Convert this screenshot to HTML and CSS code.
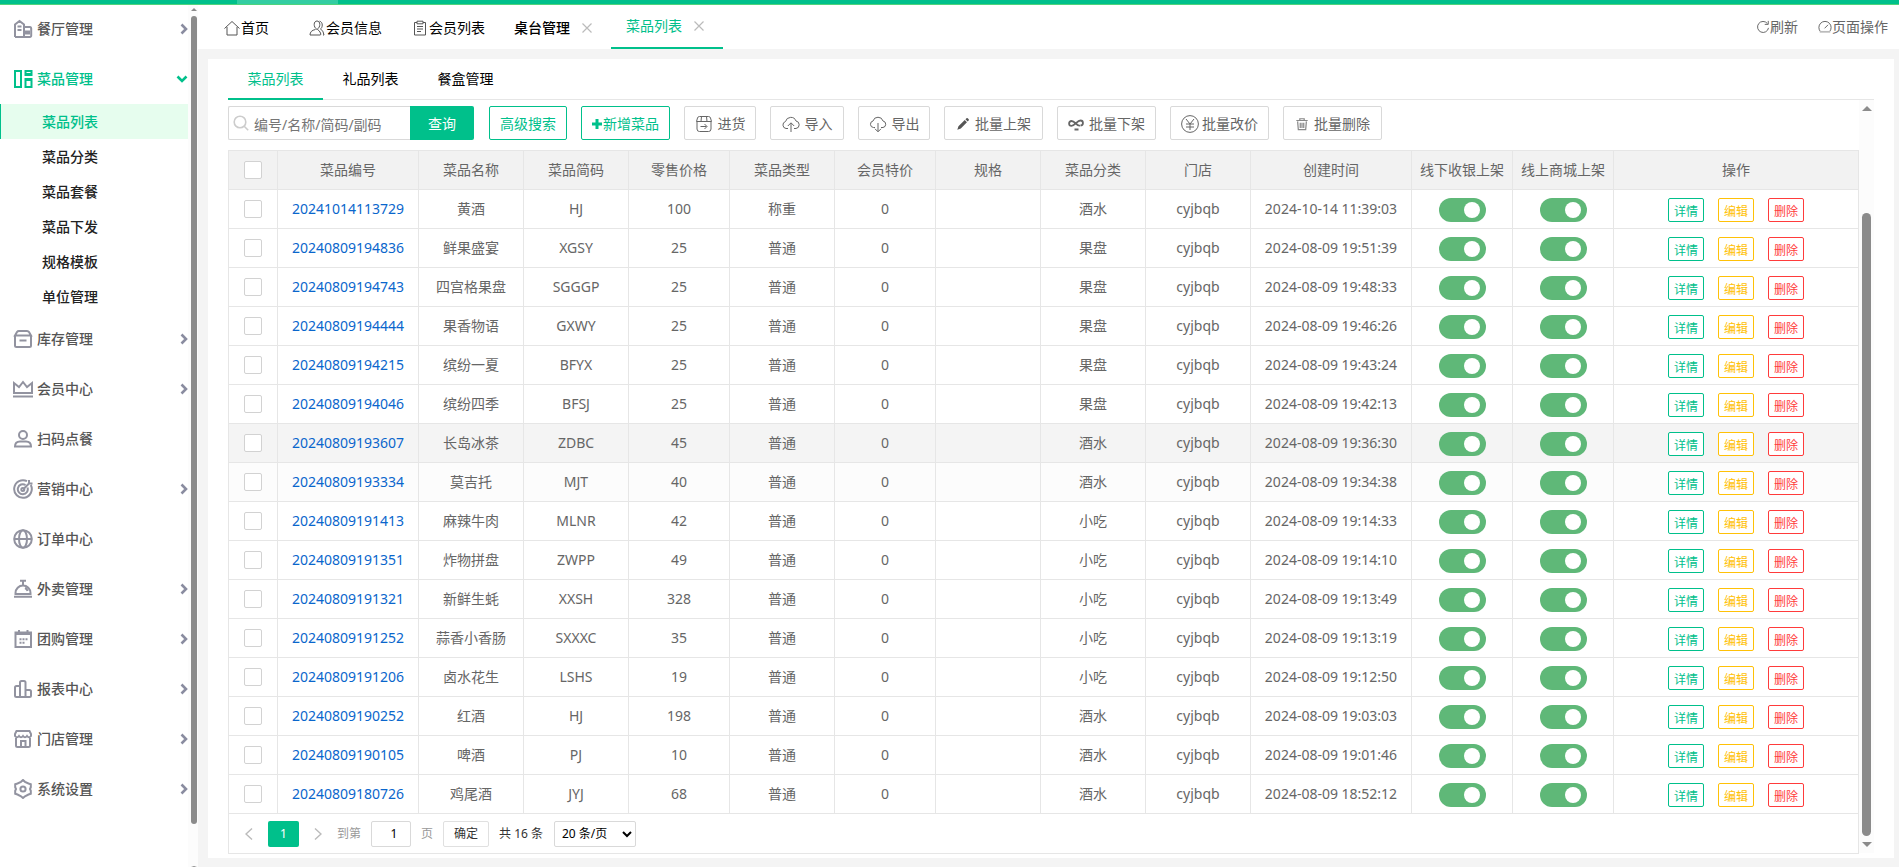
FILE: index.html
```html
<!DOCTYPE html>
<html lang="zh-CN">
<head>
<meta charset="utf-8">
<title>菜品列表</title>
<link rel="stylesheet" href="styles.css">
</head>
<body>
<header class="topbar"><span class="topbar-active"></span></header>
<div class="shell">
  <aside class="sidebar">
    <nav class="menu">
      <a class="item" href="#"><svg class="mi" viewBox="0 0 20 20"><path d="M2 18V5.500L6.500 2 11 5.500V18M2 18h15a1.200 1.200 0 0 0 1.200-1.200V9.500A1.500 1.500 0 0 0 17 8h-6M4.500 7.500h4M4.500 11h4M13 12.500h3v2h-3z"/></svg>餐厅管理<svg class="arr" viewBox="0 0 8 12"><path d="M1.500 1.500 6 6l-4.500 4.500"/></svg></a>
      <a class="item open" href="#"><svg class="mi" viewBox="0 0 20 20"><path d="M2 2h6v16H2zM12.500 2h6v4h-6zM12.500 10h6v8h-6zM12.500 5h6M12.500 11h6"/></svg>菜品管理<svg class="arr down" viewBox="0 0 12 8"><path d="M1.500 1.500 6 6l4.500-4.500"/></svg></a>
      <div class="sub">
        <a class="on" href="#">菜品列表</a>
        <a href="#">菜品分类</a>
        <a href="#">菜品套餐</a>
        <a href="#">菜品下发</a>
        <a href="#">规格模板</a>
        <a href="#">单位管理</a>
      </div>
      <a class="item" href="#"><svg class="mi" viewBox="0 0 20 20"><path d="M2 6v10.500A1.500 1.500 0 0 0 3.500 18h13a1.500 1.500 0 0 0 1.500-1.500V6M2 6.500h16L16 3q-.6-1-2-1H6Q4.600 2 4 3zM6.500 11.500h7"/></svg>库存管理<svg class="arr" viewBox="0 0 8 12"><path d="M1.500 1.500 6 6l-4.500 4.500"/></svg></a>
      <a class="item" href="#"><svg class="mi" viewBox="0 0 20 20"><path d="M1 14V4l5 4 4-5 4 5 5-4v10zM0 17.500h20"/></svg>会员中心<svg class="arr" viewBox="0 0 8 12"><path d="M1.500 1.500 6 6l-4.500 4.500"/></svg></a>
      <a class="item" href="#"><svg class="mi" viewBox="0 0 20 20"><circle cx="10" cy="6" r="4"/><path d="M2 17.500q0-5 5-5h6q5 0 5 5z"/></svg>扫码点餐</a>
      <a class="item" href="#"><svg class="mi" viewBox="0 0 20 20"><path d="M14 2.200A8.800 8.800 0 1 0 17.800 6M12.500 6A5 5 0 1 0 14.500 8.500M10 10.500 17 3.500M16 1v3.500h3.500"/><circle cx="9.800" cy="10.500" r="1.500"/></svg>营销中心<svg class="arr" viewBox="0 0 8 12"><path d="M1.500 1.500 6 6l-4.500 4.500"/></svg></a>
      <a class="item" href="#"><svg class="mi" viewBox="0 0 20 20"><circle cx="10" cy="10" r="8.800"/><ellipse cx="10" cy="10" rx="4" ry="8.800"/><path d="M1 10h18"/></svg>订单中心</a>
      <a class="item" href="#"><svg class="mi" viewBox="0 0 20 20"><path d="M2.500 15v-1a7.500 7.500 0 0 1 15 0v1zM1 17.800h18M7 1.800h6M10 2v4M12 9q2 .8 2.600 3"/></svg>外卖管理<svg class="arr" viewBox="0 0 8 12"><path d="M1.500 1.500 6 6l-4.500 4.500"/></svg></a>
      <a class="item" href="#"><svg class="mi" viewBox="0 0 20 20"><path d="M2.500 3.500h15.500V18h-15.500zM2.500 5H18M6 1v3M14.500 1v3M6.500 10.200h2M9.500 10.200h2M12.500 10.200h2M6.500 13.700h2M9.500 13.700h2"/></svg>团购管理<svg class="arr" viewBox="0 0 8 12"><path d="M1.500 1.500 6 6l-4.500 4.500"/></svg></a>
      <a class="item" href="#"><svg class="mi" viewBox="0 0 20 20"><path d="M7 18V3.500Q7 2 8.500 2h2.500q1.500 0 1.500 1.500V18M7 7H3.500Q2 7 2 8.500v8Q2 18 3.500 18h13q1.500 0 1.500-1.500v-4Q18 11 16.500 11h-4"/></svg>报表中心<svg class="arr" viewBox="0 0 8 12"><path d="M1.500 1.500 6 6l-4.500 4.500"/></svg></a>
      <a class="item" href="#"><svg class="mi" viewBox="0 0 20 20"><path d="M3 9v7.500Q3 18 4.500 18h11q1.500 0 1.500-1.500V9M8 18v-6h4.500v6M3.500 2h13l1.500 3v2q-2 2.600-4 0-2 2.600-4 0-2 2.600-4 0-2 2.600-4 0V5z"/></svg>门店管理<svg class="arr" viewBox="0 0 8 12"><path d="M1.500 1.500 6 6l-4.500 4.500"/></svg></a>
      <a class="item" href="#"><svg class="mi" viewBox="0 0 20 20"><path d="M8 2.800 10 1l2 1.800 3.500 1.700 2.300.7v3l-.8 1.800.8 1.800v3l-2.300.7L12 17.300 10 19l-2-1.700-3.500-1.800-2.300-.7v-3L3 10l-.8-1.800v-3l2.300-.7z"/><circle cx="10" cy="10" r="2.600"/></svg>系统设置<svg class="arr" viewBox="0 0 8 12"><path d="M1.500 1.500 6 6l-4.500 4.500"/></svg></a>
    </nav>
    <div class="side-scroll"><i class="tri up"></i><i class="thumb"></i><i class="tri end"></i></div>
  </aside>
  <div class="main">
    <div class="pagebar">
      <nav class="pages">
        <a class="p-home" href="#"><svg class="pi" viewBox="0 0 16 16"><path d="M.5 8.500 8 1.500l7.500 7M3 7v8h10V7"/></svg>首页</a>
        <a class="p-info" href="#"><svg class="pi" viewBox="0 0 16 16"><path d="M8 9.500C4 7 4.500 1 8 1s4 6 0 8.500zM6.500 9.500Q1 10.500 1 15h10q1.500 0 .5-2-1-2.500-3-3.500M10.500 1.200C14.500 2 13.500 8 11.500 9q3 1.500 3.500 6h-1"/></svg>会员信息</a>
        <a class="p-list" href="#"><svg class="pi" viewBox="0 0 16 16"><path d="M5 2.500H2.500v12.500h11V2.500H11M5 1.200h6v2.600H5zM5 6.500h6M5 9h6M5 11.500h4"/></svg>会员列表</a>
        <a class="p-desk" href="#">桌台管理<svg class="x" viewBox="0 0 10 10"><path d="m.5.500 9 9m0-9-9 9"/></svg></a>
        <a class="p-on" href="#">菜品列表<svg class="x" viewBox="0 0 10 10"><path d="m.5.500 9 9m0-9-9 9"/></svg></a>
      </nav>
      <div class="tools">
        <a href="#"><svg class="pi" viewBox="0 0 16 16"><path d="M13 4A6.300 6.300 0 1 0 14.300 9M10 5h4V1"/></svg>刷新</a>
        <a href="#"><svg class="pi" viewBox="0 0 16 16"><path d="M3 13.500A7 7 0 1 1 13 13.500M7.500 9.500l4-4"/><path class="soft" d="M2 13.500h12"/></svg>页面操作</a>
      </div>
    </div>
    <main class="card">
      <nav class="tabs"><a class="on" href="#">菜品列表</a><a href="#">礼品列表</a><a href="#">餐盒管理</a></nav>
      <div class="body">
        <div class="content">
          <div class="bar">
            <div class="search">
              <svg class="lens" viewBox="0 0 16 16"><circle cx="7" cy="7" r="5.800"/><path d="m11.200 11.200 4 4"/></svg>
              <input type="text" aria-label="搜索菜品" placeholder="编号/名称/简码/副码"><button>查询</button>
            </div>
            <button class="btn green adv">高级搜索</button>
            <button class="btn green add"><svg viewBox="0 0 10 10"><path d="M5 0v10M0 5h10"/></svg>新增菜品</button>
            <button class="btn stock"><svg viewBox="0 0 18 18"><path d="M2 6.500V14q0 2.500 2.500 2.500h9Q16 16.500 16 14V6.500M1.500 6.500l1-3.500q.4-1.500 2-1.500h9q1.600 0 2 1.500l1 3.500zM6.500 1.500l-.5 5M11.500 1.500l.5 5M5.500 11.500h6M9.500 9l2.500 2.500L9.500 14"/></svg>进货</button>
            <button class="btn in"><svg viewBox="0 0 18 18"><path d="M6 13.500H4A3.600 3.600 0 0 1 3.500 6.500 5.500 5.500 0 0 1 14 6a3.800 3.800 0 0 1 0 7.500h-2M9 17V8M5.800 11 9 7.800l3.200 3.200"/></svg>导入</button>
            <button class="btn out"><svg viewBox="0 0 18 18"><path d="M6 12.500H4.500A3.300 3.300 0 0 1 4 6 5.200 5.200 0 0 1 14 6a3.300 3.300 0 0 1 0 6.500h-2M9 8v8.500M6 13.800l3 3 3-3"/></svg>导出</button>
            <button class="btn bulk"><svg class="fill" viewBox="0 0 16 16"><path d="M1.500 14.500l1.300-4L10 3.500l2.500 2.500-7 7zM10.800 2.700l1.200-1.200q.7-.6 1.400 0l1.100 1.100q.6.700 0 1.400l-1.200 1.200z"/></svg>批量上架</button>
            <button class="btn bulk"><svg class="bold" viewBox="0 0 16 16"><path d="M12 9.500C9 10.500 7 5 3.500 5a2.300 2.300 0 1 0 0 4.800C7 9.800 9 4.500 12.500 4.500a2.400 2.400 0 0 1 0 4.900M6.500 13.500h4"/></svg>批量下架</button>
            <button class="btn bulk yen"><svg viewBox="0 0 18 18"><circle cx="9" cy="9" r="8.400"/><path d="m5 4 4 5 4-5M9 9v6M5 9h8M5 12h8"/></svg>批量改价</button>
            <button class="btn bulk del-all"><svg viewBox="0 0 16 16"><path d="M1.500 4h13M5.500 3.500V2h5v1.500M3 5l.8 9.500h8.400L13 5M6 6.500v6M8 6.500v6M10 6.500v6"/></svg>批量删除</button>
          </div>
          <table>
            <colgroup><col class="c1"><col class="c2"><col class="c3"><col class="c3"><col class="c4"><col class="c3"><col class="c4"><col class="c3"><col class="c3"><col class="c3"><col class="c5"><col class="c4"><col class="c4"><col></colgroup>
            <thead><tr><th><input type="checkbox" aria-label="全选"></th><th>菜品编号</th><th>菜品名称</th><th>菜品简码</th><th>零售价格</th><th>菜品类型</th><th>会员特价</th><th>规格</th><th>菜品分类</th><th>门店</th><th>创建时间</th><th>线下收银上架</th><th>线上商城上架</th><th>操作</th></tr></thead>
            <tbody id="rows"></tbody>
          </table>
          <div class="pager">
            <a class="step" href="#" aria-label="上一页"><svg viewBox="0 0 8 12"><path d="M7 .5 1 6l6 5.500"/></svg></a>
            <a class="cur" href="#">1</a>
            <a class="step" href="#" aria-label="下一页"><svg viewBox="0 0 8 12"><path d="m1 .5 6 5.500-6 5.500"/></svg></a>
            <label class="goto">到第<input type="text" value="1">页</label>
            <button>确定</button>
            <span class="total">共 16 条</span>
            <select aria-label="每页条数"><option>20 条/页</option></select>
          </div>
        </div>
        <div class="scroll"><i class="tri up"></i><i class="thumb"></i><i class="tri dn"></i></div>
      </div>
    </main>
  </div>
</div>
<script src="rows.js"></script>
</body>
</html>
```
FILE: rows.js
```js
const dishes = [
  ["20241014113729", "黄酒", "HJ", "100", "称重", "酒水", "2024-10-14 11:39:03"],
  ["20240809194836", "鲜果盛宴", "XGSY", "25", "普通", "果盘", "2024-08-09 19:51:39"],
  ["20240809194743", "四宫格果盘", "SGGGP", "25", "普通", "果盘", "2024-08-09 19:48:33"],
  ["20240809194444", "果香物语", "GXWY", "25", "普通", "果盘", "2024-08-09 19:46:26"],
  ["20240809194215", "缤纷一夏", "BFYX", "25", "普通", "果盘", "2024-08-09 19:43:24"],
  ["20240809194046", "缤纷四季", "BFSJ", "25", "普通", "果盘", "2024-08-09 19:42:13"],
  ["20240809193607", "长岛冰茶", "ZDBC", "45", "普通", "酒水", "2024-08-09 19:36:30", "hover"],
  ["20240809193334", "莫吉托", "MJT", "40", "普通", "酒水", "2024-08-09 19:34:38", "fading"],
  ["20240809191413", "麻辣牛肉", "MLNR", "42", "普通", "小吃", "2024-08-09 19:14:33"],
  ["20240809191351", "炸物拼盘", "ZWPP", "49", "普通", "小吃", "2024-08-09 19:14:10"],
  ["20240809191321", "新鲜生蚝", "XXSH", "328", "普通", "小吃", "2024-08-09 19:13:49"],
  ["20240809191252", "蒜香小香肠", "SXXXC", "35", "普通", "小吃", "2024-08-09 19:13:19"],
  ["20240809191206", "卤水花生", "LSHS", "19", "普通", "小吃", "2024-08-09 19:12:50"],
  ["20240809190252", "红酒", "HJ", "198", "普通", "酒水", "2024-08-09 19:03:03"],
  ["20240809190105", "啤酒", "PJ", "10", "普通", "酒水", "2024-08-09 19:01:46"],
  ["20240809180726", "鸡尾酒", "JYJ", "68", "普通", "酒水", "2024-08-09 18:52:12"]
];
document.getElementById("rows").innerHTML = dishes.map(([id, name, code, price, type, group, time, state = ""]) => `
<tr class="${state}">
<td><input type="checkbox" aria-label="选择${name}"></td>
<td><a class="id" href="#">${id}</a></td><td>${name}</td><td>${code}</td><td>${price}</td><td>${type}</td>
<td>0</td><td></td><td>${group}</td><td>cyjbqb</td><td>${time}</td>
<td class="ctl"><input class="switch" type="checkbox" checked aria-label="${name}线下收银上架"></td>
<td class="ctl"><input class="switch" type="checkbox" checked aria-label="${name}线上商城上架"></td>
<td class="ctl"><div class="ops"><button class="view">详情</button><button class="edit">编辑</button><button class="del">删除</button></div></td>
</tr>`).join("");
```
FILE: styles.css
```css
* { box-sizing: border-box; }
body {
  margin: 0;
  height: 100vh;
  display: flex;
  flex-direction: column;
  overflow: hidden;
  background: #fff;
  color: #666;
  font: 14px/20px "Noto Sans", "Noto Sans CJK SC", sans-serif;
}
a { color: inherit; text-decoration: none; }
button, input, select { font: inherit; margin: 0; }
svg { flex: none; fill: none; stroke: currentColor; }

.topbar {
  position: relative;
  z-index: 1;
  flex: none;
  height: 4px;
  padding-left: 237px;
  background: #00c08b;
  box-shadow: 0 1px #4fd37c;
}
.topbar-active { display: block; width: 101px; height: 4px; background: #33cda2; }
.shell { flex: 1; min-height: 0; display: flex; }

.sidebar { flex: none; width: 198px; display: flex; }
.menu { flex: none; width: 188px; }
.item {
  display: flex;
  align-items: center;
  height: 50px;
  padding-left: 13px;
  gap: 4px;
  font-weight: 500;
  color: #555;
}
.item.open { color: #00c08b; }
.mi { width: 20px; height: 20px; stroke: #9293a0; stroke-width: 2; }
.arr { width: 8px; height: 12px; margin-left: auto; stroke: #8a8ca0; stroke-width: 2.6; }
.arr.down { width: 12px; height: 8px; }
.open .mi, .open .arr { stroke: #00c08b; }
.sub a {
  display: block;
  height: 35px;
  padding-left: 41px;
  border-left: 1px solid transparent;
  line-height: 35px;
  font-weight: 500;
  color: #222;
}
.sub .on { background: #e6fdee; border-color: #00c08b; color: #00c08b; }
.side-scroll, .scroll { display: flex; flex-direction: column; align-items: center; background: #fcfcfc; }
.side-scroll { width: 10px; padding: 4px 0 0 1px; }
.side-scroll .thumb { width: 6px; flex: 1; margin: 5px 0 42px; border-radius: 3px; background: #8b8b8b; }
.tri { width: 0; height: 0; border: solid transparent; }
.side-scroll .tri { border-width: 0 3px 3px; border-bottom-color: #8b8b8b; }
.side-scroll .end { border-width: 1px 3px 0; border-top-color: #8b8b8b; }

.main { flex: 1; min-width: 0; display: flex; flex-direction: column; background: #f4f4f4; }
.pagebar {
  flex: none;
  height: 45px;
  display: flex;
  justify-content: space-between;
  padding: 0 11px 0 26px;
  background: #fff;
}
.pages, .pages a, .tools, .tools a { display: flex; align-items: center; }
.pages { color: #000; }
.pages a { height: 44px; padding-top: 2px; gap: 1px; }
.pi { width: 16px; height: 16px; stroke: #555; stroke-width: 1; }
.pages .p-info { margin-left: 40px; }
.pages .p-list { margin-left: 30px; }
.pages .p-desk { margin-left: 29px; font-weight: 500; }
.x { width: 10px; height: 10px; margin-left: 11px; stroke: #bbb; stroke-width: 1.2; }
.pages .p-on { margin-left: 19px; padding: 0 19px 0 15px; border-bottom: 2px solid #00c08b; color: #00c08b; }
.tools { gap: 20px; }
.tools .pi { width: 14px; height: 14px; }
.pi .soft { stroke: #bbb; stroke-width: 2; }

.card {
  flex: 1;
  min-height: 0;
  display: flex;
  flex-direction: column;
  margin: 10px 5px 9px 10px;
  padding: 0 20px 5px;
  background: #fff;
}
.tabs { display: flex; height: 41px; border-bottom: 1px solid #e6e6e6; color: #000; flex: none; }
.tabs a { width: 95px; height: 41px; line-height: 40px; text-align: center; }
.tabs .on { color: #00c08b; border-bottom: 2px solid #00c08b; }
.body { flex: 1; min-height: 0; display: flex; }
.content { flex: 1; min-width: 0; }
.scroll { flex: none; width: 15px; padding: 6px 0; }
.scroll .up { border-width: 0 5px 5px; border-bottom-color: #8b8b8b; }
.scroll .dn { border-width: 5px 5px 0; border-top-color: #8b8b8b; }
.scroll .thumb { flex: 1; width: 9px; margin: 102px 0 6px; border-radius: 5px; background: #8b8b8b; }

.bar { display: flex; padding: 6px 0 10px; gap: 14px; }
.search { position: relative; display: flex; margin-right: 1px; }
.search input { width: 182px; height: 34px; padding: 2px 0 0 25px; border: 1px solid #d9d9d9; border-right: 0; border-radius: 2px 0 0 2px; outline: 0; }
.search input::placeholder { color: #757575; }
.search button { width: 64px; padding: 2px 0 0; border: 0; border-radius: 0 2px 2px 0; background: #00c08b; color: #fff; }
.lens { position: absolute; left: 5px; top: 9px; width: 16px; height: 16px; stroke: #ccc; stroke-width: 1.6; }
.btn {
  display: flex;
  align-items: center;
  justify-content: center;
  height: 34px;
  padding: 2px 0 0;
  border: 1px solid #d9d9d9;
  border-radius: 2px;
  background: #fff;
  color: #666;
  gap: 5px;
}
.btn svg { width: 18px; height: 18px; }
.green { border-color: #00c08b; color: #00c08b; }
.adv { width: 78px; }
.add { width: 89px; gap: 1px; }
.add svg { width: 10px; height: 10px; stroke-width: 3; }
.stock { width: 72px; }
.in { width: 74px; }
.out { width: 72px; }
.bulk { width: 99px; }
.bulk svg { width: 14px; height: 14px; }
.yen { gap: 3px; }
.yen svg { width: 18px; height: 18px; }
.btn .fill { fill: #555; stroke: none; }
.btn .bold { width: 16px; height: 16px; stroke-width: 1.8; }
.del-all svg { stroke: #888; stroke-width: 1.4; }

table { width: 100%; border-collapse: collapse; table-layout: fixed; }
th, td { height: 39px; padding: 0; border: 1px solid #e6e6e6; text-align: center; font-weight: 400; line-height: 20px; }
th { background: #f2f2f2; }
.hover { background: #f4f4f4; }
.fading { background: #fcfcfc; }
.ctl { padding-top: 2px; }
.c1 { width: 49px; } .c2 { width: 141px; } .c3 { width: 105px; } .c4 { width: 101px; } .c5 { width: 161px; }
td input, th input { display: block; margin: 0 auto; }
input[type="checkbox"] { appearance: none; width: 18px; height: 18px; border: 1px solid #d2d2d2; border-radius: 2px; background: #fff; }
input.switch[type="checkbox"] {
  width: 47px;
  height: 24px;
  padding: 4px 6px;
  border: 0;
  border-radius: 12px;
  background: #5fb878;
}
.switch::before { content: ""; display: block; width: 16px; height: 16px; margin-left: auto; border-radius: 50%; background: #fff; }
.id { color: #0a66cc; }
.ops { display: flex; justify-content: center; gap: 14px; }
.ops button { width: 36px; height: 24px; padding: 3px 0 0; border: 1px solid; border-radius: 2px; background: #fff; font-size: 12px; line-height: 19px; }
.view { color: #00c08b; }
.edit { color: #ffc107; }
.del { color: #ff3b3b; }

.pager {
  display: flex;
  align-items: center;
  height: 40px;
  padding-left: 16px;
  border: 1px solid #e6e6e6;
  border-top: 0;
  font-size: 12px;
  color: #333;
}
.step { display: flex; width: 8px; }
.step svg { width: 8px; height: 12px; stroke: #bbb; stroke-width: 1.4; }
.cur { width: 31px; height: 26px; margin: 0 15px; border-radius: 2px; background: #00c08b; color: #fff; line-height: 26px; text-align: center; }
.goto { display: flex; align-items: center; margin-left: 15px; gap: 10px; color: #999; }
.goto input { width: 40px; height: 26px; padding: 0 0 0 6px; border: 1px solid #d9d9d9; border-radius: 2px; text-align: center; color: #000; }
.pager button { width: 46px; height: 26px; margin: 0 10px; padding: 0; border: 1px solid #e0e0e0; border-radius: 2px; background: #fff; color: #333; }
.pager select { width: 82px; height: 26px; margin-left: 11px; padding: 0 0 0 3px; border: 1px solid #d9d9d9; border-radius: 2px; background: #fff; color: #000; }
```
